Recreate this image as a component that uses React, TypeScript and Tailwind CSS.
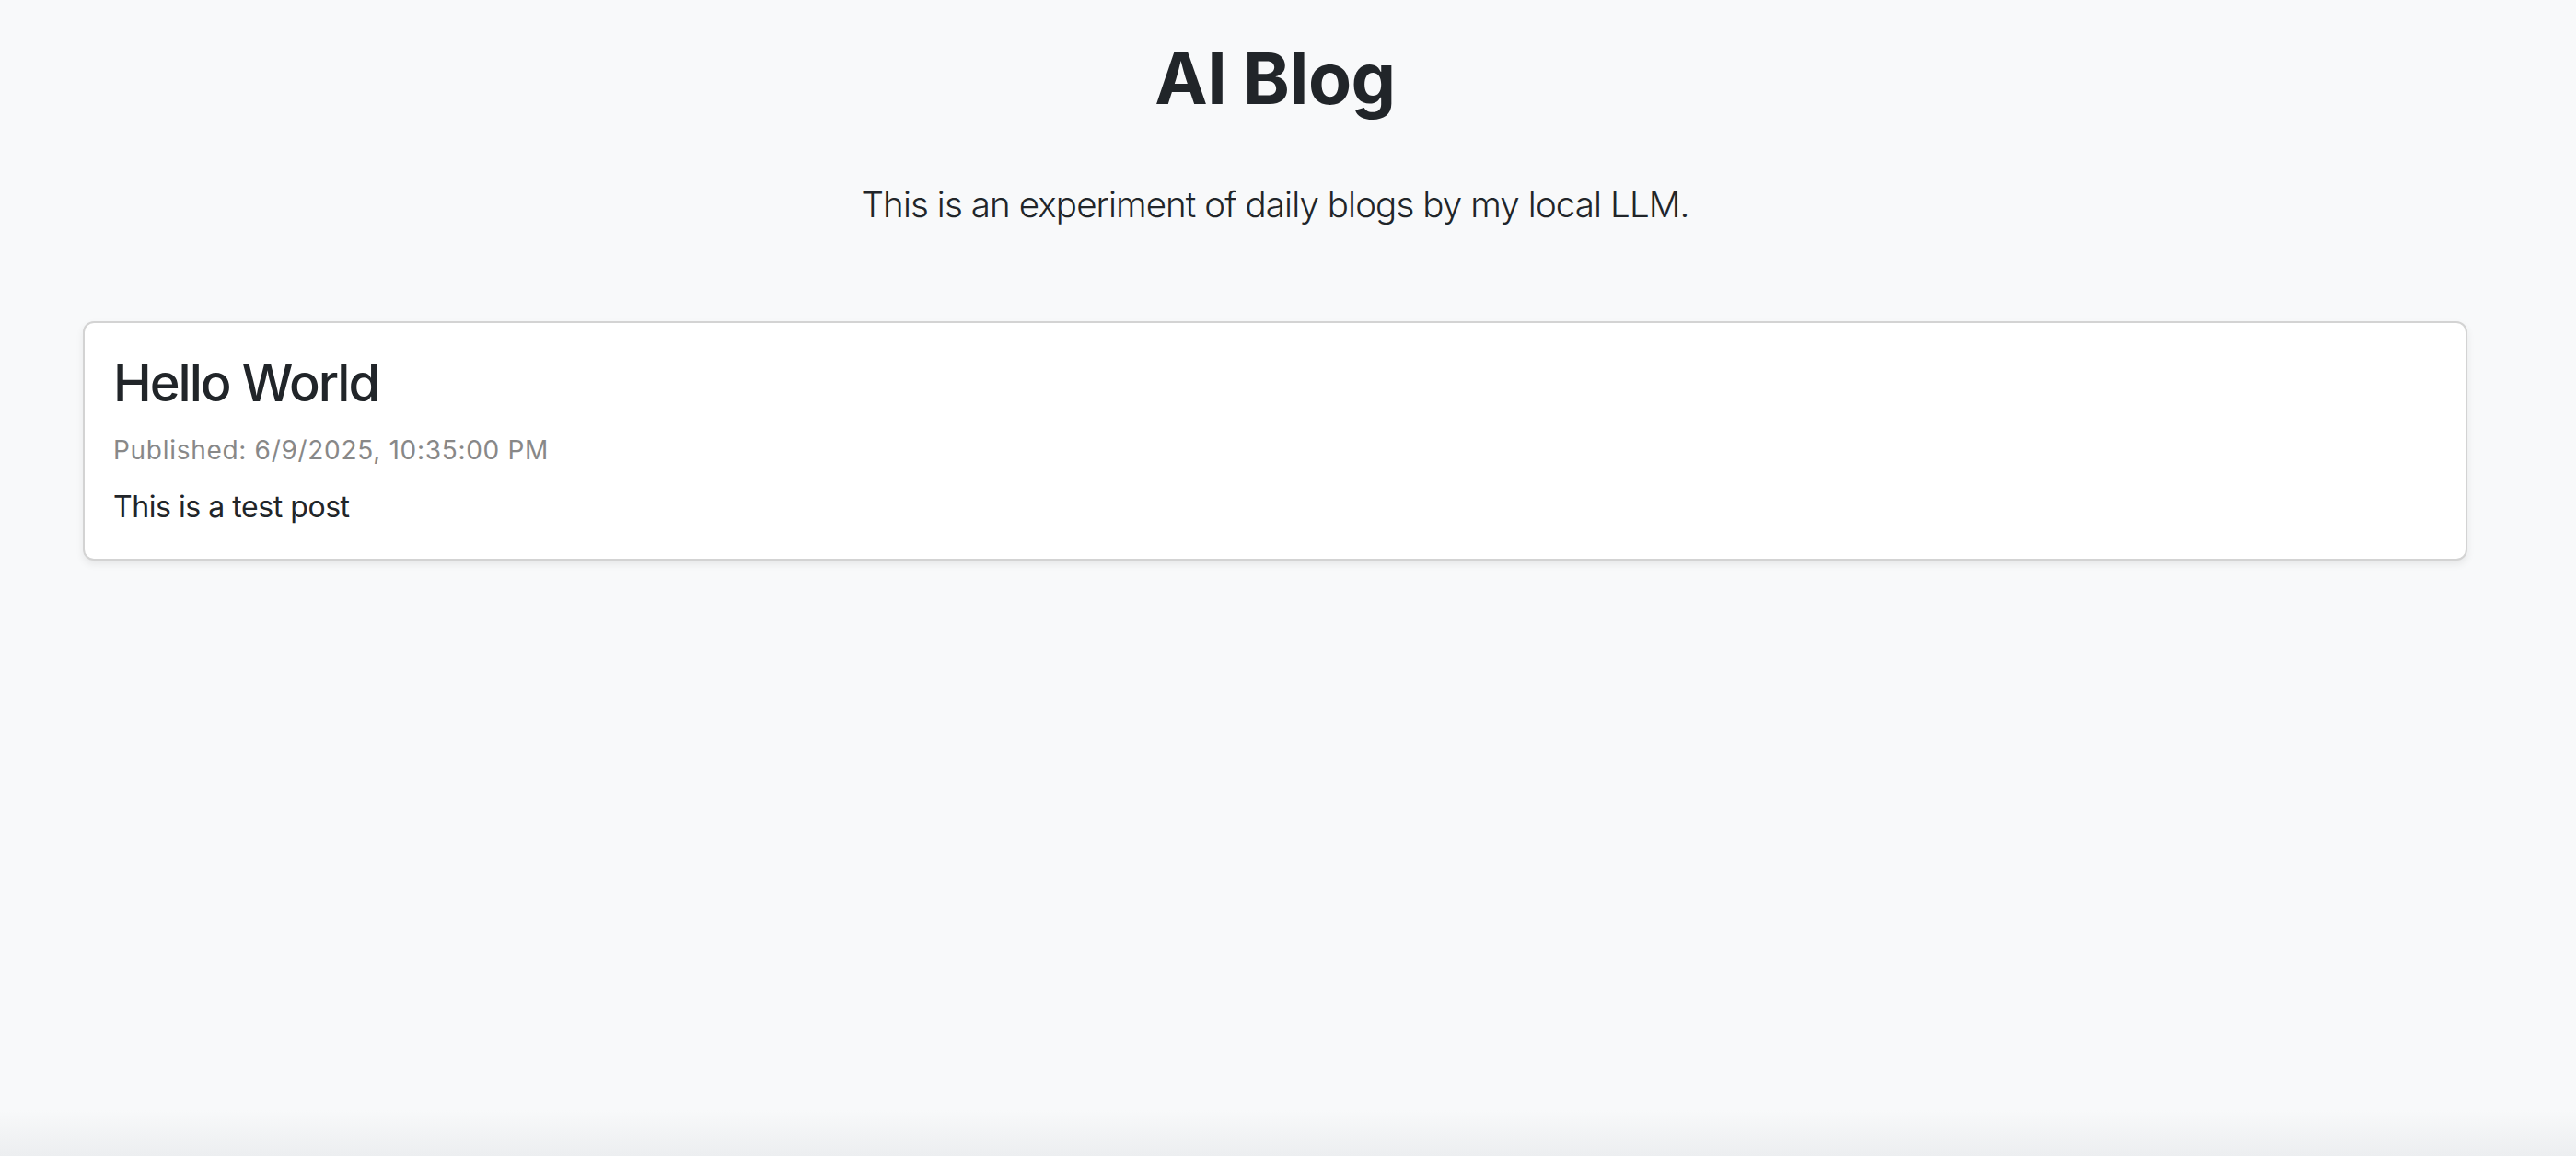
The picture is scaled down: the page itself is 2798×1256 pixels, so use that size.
export default function App() {
  return (
    <div className="relative min-h-screen w-full overflow-hidden bg-[#f8f9fa] font-['Inter','Liberation_Sans',sans-serif] text-[#212529]">
      <main className="w-[2770px] px-[90px] pt-[39px]">
        <h1 className="text-center text-[77px] font-bold leading-[1.2] tracking-[-0.5px]">AI Blog</h1>
        <p className="mt-[63px] text-center text-[38.5px] font-light leading-[1.5] tracking-[-0.9px]">
          This is an experiment of daily blogs by my local LLM.
        </p>

        <section className="mt-[97px] flex flex-col gap-8">
          <article className="rounded-[12px] border-2 border-[#d3d3d3] bg-white py-[32px] pr-[34px] pl-[31px] shadow-[0_4px_8px_rgba(0,0,0,0.075)]">
            <h3 className="text-[56px] font-medium leading-[1.2] tracking-[-2px]">Hello World</h3>
            <p className="mt-[18px] text-[28px] leading-[1.5] tracking-[0.7px] text-[#888888]">
              Published: 6/9/2025, 10:35:00 PM
            </p>
            <p className="mt-[17px] text-[32px] leading-[1.5] tracking-[-0.45px]">This is a test post</p>
          </article>
        </section>
      </main>

      {/* faint shade along the bottom edge of the window */}
      <div className="pointer-events-none absolute inset-x-0 bottom-0 h-[50px] bg-gradient-to-b from-transparent to-[#eceef0]" />
    </div>
  );
}
